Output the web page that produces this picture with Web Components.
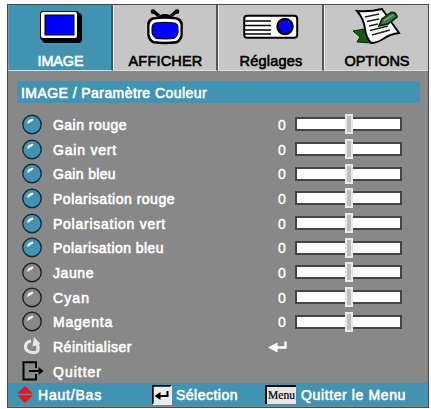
<!DOCTYPE html>
<html lang="fr">
<head>
<meta charset="utf-8">
<title>IMAGE / Paramètre Couleur</title>
<style>
html,body{margin:0;background:#fff;overflow:hidden}
body{font-family:"Liberation Sans",Arial,sans-serif;font-size:14px;color:#fff;padding:4px 0 0 7px}
</style>
</head>
<body>
<osd-menu></osd-menu>
<script>
const icons = {
  image: `<svg width="44" height="34" viewBox="0 0 44 34"><rect x="4" y="3" width="40" height="30" rx="4"/><rect x="2" y="1" width="39" height="29" rx="3"/><rect x="3" y="2" width="36" height="26" rx="2" fill="#fff"/><rect x="7" y="5" width="29" height="20" fill="#00f" stroke="#000"/></svg>`,
  tv: `<svg width="38" height="36" viewBox="0 0 38 36"><path d="M7 2L13 7M31 2L25 7" stroke="#000" stroke-width="3.5"/><circle cx="7" cy="2.6" r="2.4"/><circle cx="31" cy="2.6" r="2.4"/><path d="M12 9Q13 5 19 5T26 9Z"/><path d="M6 8.500Q19 6 32 8.500Q36 10 36.800 14V26Q36 32 31 34.500Q19 36 7 34.500Q2 32 1.200 26V14Q2 10 6 8.500Z"/><path d="M8 10.500Q19 9 30 10.500Q34 12 34.500 16V25Q34 30 30 32Q19 33.500 8 32Q4 30 3.500 25V16Q4 12 8 10.500Z" fill="#fff"/><path d="M9 14Q19 12.500 29 14Q32 15 32 18V24Q31 28 28 29.500Q19 30.500 10 29.500Q7 28 6 24V18Q6 15 9 14Z" fill="#00f" stroke="#000"/></svg>`,
  projector: `<svg width="56" height="26" viewBox="0 0 56 26"><rect x="1.200" y="1.700" width="53" height="22" rx="3" fill="#fff" stroke="#000" stroke-width="2"/><path d="M1 7H28M1 11.500H28M1 16H28M1 20H28" stroke="#000" stroke-width="1.700"/><circle cx="42" cy="12.500" r="7.600" fill="#00f" stroke="#000" stroke-width="2.200"/></svg>`,
  options: `<svg width="50" height="38" viewBox="0 0 50 38"><path d="M1 23L12 21L24 34L20 35L5 34L8 29Z" fill="#165b16" stroke="#062806"/><path d="M5 3Q18 4 30 1L47 25Q38 26 31 31Q25 35 19 35Q14 29 13 21Q12 11 5 3Z" fill="#fff" stroke="#000" stroke-width="1.900"/><path d="M13 9L27 6M15 13.500L27 11M17 18L26 16M18 22.500L36 18M20 27L38 22" stroke="#222" stroke-width="1.500"/><path d="M27 18L30 11L39 4.500Q44 4 45 9L36 16Z" fill="#3b7a42" stroke="#092b0c" stroke-width="1.800"/><path d="M32 12.500L41 7" stroke="#86ad83" stroke-width="1.300"/></svg>`,
  on: `<svg width="20" height="21" viewBox="0 0 20 21"><circle cx="10" cy="10.500" r="9.200" fill="#4292b2" stroke="#112b38" stroke-width="1.400"/><path d="M5 10L6 6.500L10.500 4.500L11.500 6L8 8.500Z" fill="#fff"/></svg>`,
  off: `<svg width="20" height="21" viewBox="0 0 20 21"><circle cx="10" cy="10.500" r="9.200" fill="#888" stroke="#202020" stroke-width="1.400"/><path d="M5 10L6 6.500L10.500 4.500L11.500 6L8 8.500Z" fill="#fff"/></svg>`,
  reset: `<svg width="20" height="18" viewBox="0 0 20 18"><path d="M9 4Q4 4.500 3.500 9.500T10 15.500T16 10Q16 8 14.500 6" fill="none" stroke="#e6e6e6" stroke-width="3.200"/><path d="M12 0L18.500 7L10.500 9.500Z" fill="#e6e6e6"/></svg>`,
  exit: `<svg width="22" height="20" viewBox="0 0 22 20"><path d="M14 7V1.200H1.500V18.500H14V13M7 10H18" fill="none" stroke="#000" stroke-width="2"/><path d="M16.500 6L21.500 10L16.500 14Z"/></svg>`,
  enter: `<svg width="19" height="13" viewBox="0 0 19 13"><path d="M17.500 1.500V7.500H8" fill="none" stroke="#fff" stroke-width="2.400"/><path d="M0 7.500L9.500 2.500V12.500Z" fill="#fff"/></svg>`,
  updown: `<svg width="16" height="17" viewBox="0 0 16 17"><path d="M8 0L16 7.700H0ZM0 9.200H16L8 17Z" fill="#f21018"/></svg>`,
  key: `<svg width="20" height="20" viewBox="0 0 20 20"><rect width="20" height="20" fill="#ececec"/><path d="M0 0H20L18 1.700H1.700V18L0 20Z"/><path d="M15.500 6V11H8" fill="none" stroke="#000" stroke-width="2"/><path d="M2.500 11L8.500 7V15Z"/></svg>`
};

/* Shared base: fills the open shadow root with styles and markup. */
class OsdElement extends HTMLElement {
  connectedCallback() {
    if (this.shadowRoot) return;
    const t = document.createElement('template');
    t.innerHTML = this.view();
    this.attachShadow({mode: 'open'}).append(t.content.cloneNode(true));
    this.ready();
  }
  ready() {}
  attr(n) { return this.getAttribute(n) || ''; }
}

/* Text spread to a fixed advance width with letter spacing. */
customElements.define('osd-text', class extends OsdElement {
  view() { return `<style>:host{display:block;white-space:nowrap;line-height:18px;-webkit-text-stroke:.6px currentColor}span{display:inline-block}</style><span><slot></slot></span>`; }
  ready() {
    const s = this.shadowRoot.querySelector('span');
    const n = this.textContent.length, w = +this.attr('w');
    if (w && n > 1) s.style.letterSpacing = (w - s.getBoundingClientRect().width) / n + 'px';
  }
});

customElements.define('osd-icon', class extends OsdElement {
  view() { return `<style>:host{display:block;flex:none}svg{display:block}</style>${icons[this.attr('name')]}`; }
});

customElements.define('osd-tab', class extends OsdElement {
  view() { return `<style>
    :host{display:grid;grid-template-rows:43px 23px;justify-items:center;box-sizing:border-box;background:#c6c6c6;color:#000;border-left:1px solid #eee;border-right:2px solid #555;border-bottom:1px solid #ddd;height:66px}
    :host([active]){background:#4292b2;color:#fff;border-left-color:#63a2bb}
    osd-icon{align-self:center}
    osd-text{font-size:14.500px;padding:4px 0 0 1px}
    </style><osd-icon name="${this.attr('icon')}"></osd-icon><osd-text w="${this.attr('w')}">${this.attr('label')}</osd-text>`; }
});

customElements.define('osd-slider', class extends OsdElement {
  view() { return `<style>
    :host{display:grid;width:107px;height:20px;align-items:center;justify-items:center}
    div{grid-area:1/1;box-sizing:border-box}
    .track{width:107px;height:14px;border:2px solid #454545;background:#fff}
    .knob{width:8px;height:20px;background:#bdbdbd;border:2px solid #e8e8e8}
    </style><div class="track"></div><div class="knob"></div>`; }
});

customElements.define('osd-row', class extends OsdElement {
  view() {
    const end = this.hasAttribute('value') ? `<span>${this.attr('value')}</span><osd-slider></osd-slider>` : '';
    const enter = this.hasAttribute('enter') ? `<osd-icon class="enter" name="enter"></osd-icon>` : '';
    return `<style>
    :host{display:grid;grid-template-columns:31px 1fr 17px 107px;align-items:center;height:24.680px;padding:0 26px 0 14px}
    span{line-height:18px;font-size:14px;-webkit-text-stroke:.4px;padding-top:1px}
    osd-text{padding-top:1px}
    .enter{margin-left:-10px}
    </style><osd-icon name="${this.attr('icon')}"></osd-icon><osd-text w="${this.attr('w')}">${this.attr('label')}</osd-text>${end}${enter}`;
  }
});

customElements.define('osd-footer', class extends OsdElement {
  view() { return `<style>
    :host{display:grid;grid-template-columns:135px 113px 1fr;align-items:center;height:23px;background:#4292b2;padding-left:9px}
    div{display:flex;align-items:center}
    b{box-sizing:border-box;width:31px;height:19px;background:#e6e6e6;border:solid #000;border-width:2px 0 0 2px;color:#000;font:11.500px/16px "Liberation Serif",serif;-webkit-text-stroke:.2px;text-align:center}
    </style>
    <div style="gap:5px"><osd-icon name="updown"></osd-icon><osd-text w="64">Haut/Bas</osd-text></div>
    <div style="gap:4px"><osd-icon name="key"></osd-icon><osd-text w="62">Sélection</osd-text></div>
    <div style="gap:5px"><b>Menu</b><osd-text w="105">Quitter le Menu</osd-text></div>`; }
});

customElements.define('osd-menu', class extends OsdElement {
  view() {
    const rows = [['Gain rouge',74,1],['Gain vert',64,1],['Gain bleu',63,1],['Polarisation rouge',122,1],['Polarisation vert',113,1],['Polarisation bleu',111,1],['Jaune',41],['Cyan',37],['Magenta',60]];
    return `<style>
    :host{display:block;box-sizing:border-box;width:422px;height:404px;background:#888;border:1px solid #4a4a4a}
    nav{display:grid;grid-template-columns:105px 105px 106px 104px;}
    h1{margin:10px 8px 0 9px;height:22px;background:#4292b2;font:inherit;padding:3px 0 0 4px;box-sizing:border-box}
    main{margin-top:9px;height:271px}
    </style>
    <nav><osd-tab active icon="image" label="IMAGE" w="46"></osd-tab><osd-tab icon="tv" label="AFFICHER" w="74"></osd-tab><osd-tab icon="projector" label="Réglages" w="63"></osd-tab><osd-tab icon="options" label="OPTIONS" w="65" style="border-right:0"></osd-tab></nav>
    <h1><osd-text w="186">IMAGE / Paramètre Couleur</osd-text></h1>
    <main>${rows.map(([l, w, on]) => `<osd-row label="${l}" w="${w}" icon="${on ? 'on' : 'off'}" value="0"></osd-row>`).join('')}
    <osd-row label="Réinitialiser" w="79" icon="reset" enter></osd-row>
    <osd-row label="Quitter" w="49" icon="exit"></osd-row></main>
    <osd-footer></osd-footer>`;
  }
});
</script>
</body>
</html>
